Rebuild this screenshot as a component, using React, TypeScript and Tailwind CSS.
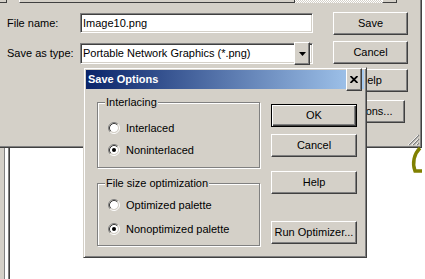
import React from "react";

const face = "bg-[#d4d0c8]";

function Btn({ children, className = "" }: { children?: React.ReactNode; className?: string }) {
  return (
    <div
      className={`flex h-[23px] items-center justify-center ${face} border border-t-white border-l-white border-r-[#404040] border-b-[#404040] shadow-[inset_-1px_-1px_0_#808080] ${className}`}
    >
      {children}
    </div>
  );
}

function Radio({ checked, label }: { checked?: boolean; label: string }) {
  return (
    <div className="flex h-[22px] items-center gap-[6px]">
      <svg width="12" height="12" viewBox="0 0 12 12" className="shrink-0">
        <circle cx="6" cy="6" r="4" fill="#fff" />
        <path d="M2.11 9.89 A5.5 5.5 0 0 1 9.89 2.11" fill="none" stroke="#808080" />
        <path d="M9.89 2.11 A5.5 5.5 0 0 1 2.11 9.89" fill="none" stroke="#fff" />
        <path d="M2.82 9.18 A4.5 4.5 0 0 1 9.18 2.82" fill="none" stroke="#404040" />
        <path d="M9.18 2.82 A4.5 4.5 0 0 1 2.82 9.18" fill="none" stroke="#d4d0c8" />
        {checked && <circle cx="6" cy="6" r="2" fill="#000" />}
      </svg>
      <span>{label}</span>
    </div>
  );
}

export default function App() {
  return (
    <div className="relative h-[279px] w-[425px] overflow-hidden bg-white font-['Liberation_Sans',Arial,sans-serif] text-[11px] leading-[13px] text-black">
      {/* parent save dialog */}
      <div className={`relative h-[148px] w-[422px] ${face} border-r border-b border-[#404040] shadow-[inset_-1px_-1px_0_#808080]`}>
        {/* toolbar remnant */}
        <div className="flex h-[3px]">
          <div className="w-[7px] border-r border-b border-[#404040]" />
          <div className="w-[12px]" />
          <div className="w-[276px] border-l border-l-white border-r border-b border-[#404040]" />
          <div className="w-[87px] bg-[repeating-conic-gradient(#d4d0c8_0_25%,#ffffff_0_50%)] bg-[length:2px_2px]" />
          <div className="w-[15px] border-l border-l-white border-r border-b border-[#404040]" />
        </div>

        <div className="flex pl-[7px]">
          <div className="w-[73px]">
            <div className="mt-[10px] flex h-[20px] items-center">File name:</div>
            <div className="mt-[10px] flex h-[21px] items-center">Save as type:</div>
          </div>

          <div className="w-[233px]">
            <div className="mt-[10px] flex h-[20px] items-center bg-white pl-[2px] border border-t-[#808080] border-l-[#808080] border-r-white border-b-white shadow-[inset_1px_1px_0_#404040,inset_-1px_-1px_0_#d4d0c8]">
              Image10.png
            </div>
            <div className="mt-[10px] flex h-[21px] items-center bg-white pl-[2px] pr-[2px] border border-t-[#808080] border-l-[#808080] border-r-white border-b-white shadow-[inset_1px_1px_0_#404040,inset_-1px_-1px_0_#d4d0c8]">
              <span className="flex-1">Portable Network Graphics (*.png)</span>
              <Btn className="h-[17px] w-[16px]">
                <svg width="7" height="4" viewBox="0 0 7 4">
                  <path d="M0 0H7L3.5 4Z" fill="#000" />
                </svg>
              </Btn>
            </div>
          </div>

          <div className="ml-[20px] w-[75px]">
            <Btn className="mt-[9px]">Save</Btn>
            <Btn className="mt-[6px]">Cancel</Btn>
            <Btn className="mt-[5px]">Help</Btn>
            <Btn className="mt-[8px] w-[72px]">Options...</Btn>
          </div>
        </div>

        {/* size grip */}
        <svg width="12" height="12" viewBox="0 0 12 12" className="absolute right-[1px] bottom-[1px]">
          <path d="M11 1L1 11M11 5L5 11M11 9L9 11" stroke="#808080" strokeWidth="1.4" />
          <path d="M10 1L0 11M10 5L4 11M10 9L8 11" stroke="#fff" strokeWidth="0.8" />
        </svg>
      </div>

      {/* window edge below */}
      <div className="flex h-[131px]">
        <div className="w-[4px] bg-[#d4d0c8]" />
        <div className="w-[1px] bg-[#808080]" />
        <div className="w-[3px] bg-white" />
        <div className="w-[1px] bg-[#808080]" />
        <div className="w-[1px] bg-[#404040]" />
      </div>

      {/* olive doodle */}
      <svg width="16" height="30" viewBox="0 0 16 30" className="absolute left-[407px] top-[146px]">
        <path d="M13 2 C7 8 5 17 8 25 L15 25" fill="none" stroke="#808000" strokeWidth="3.5" />
      </svg>

      {/* Save Options dialog */}
      <div className={`absolute left-[83px] top-[67px] flex h-[191px] w-[284px] flex-col p-[2px] ${face} border border-t-[#d4d0c8] border-l-[#d4d0c8] border-r-[#404040] border-b-[#404040] shadow-[inset_1px_1px_0_#fff,inset_-1px_-1px_0_#808080]`}>
        <div className="flex h-[19px] items-center bg-[linear-gradient(to_right,#0a246a,#a6caf0)] pl-[2px] pr-[2px]">
          <span className="flex-1 font-bold text-white">Save Options</span>
          <Btn className="h-[14px] w-[16px]">
            <svg width="8" height="7" viewBox="0 0 8 7">
              <path d="M0.5 0L7.5 7M7.5 0L0.5 7" stroke="#000" strokeWidth="1.8" />
            </svg>
          </Btn>
        </div>

        <div className="flex pl-[11px]">
          <div className="w-[163px]">
            <fieldset className="mt-[7px] h-[72px] border border-[#808080] shadow-[inset_1px_1px_0_#fff,1px_1px_0_#fff]">
              <legend className={`ml-[7px] px-[1px] ${face} leading-[13px]`}>Interlacing</legend>
              <div className="mt-[8px] pl-[10px]">
                <Radio label="Interlaced" />
                <Radio checked label="Noninterlaced" />
              </div>
            </fieldset>
            <fieldset className="mt-[9px] h-[69px] border border-[#808080] shadow-[inset_1px_1px_0_#fff,1px_1px_0_#fff]">
              <legend className={`ml-[7px] px-[1px] ${face} leading-[13px]`}>File size optimization</legend>
              <div className="mt-[4px] pl-[10px]">
                <Radio label="Optimized palette" />
                <div className="mt-[2px]">
                  <Radio checked label="Nonoptimized palette" />
                </div>
              </div>
            </fieldset>
          </div>

          <div className="ml-[11px] w-[86px]">
            <div className="mt-[15px] flex h-[23px] items-center justify-center border border-black shadow-[inset_1px_1px_0_#fff,inset_-1px_-1px_0_#404040,inset_-2px_-2px_0_#808080]">
              OK
            </div>
            <Btn className="mt-[7px]">Cancel</Btn>
            <Btn className="mt-[14px]">Help</Btn>
            <Btn className="mt-[27px]">Run Optimizer...</Btn>
          </div>
        </div>
      </div>
    </div>
  );
}
